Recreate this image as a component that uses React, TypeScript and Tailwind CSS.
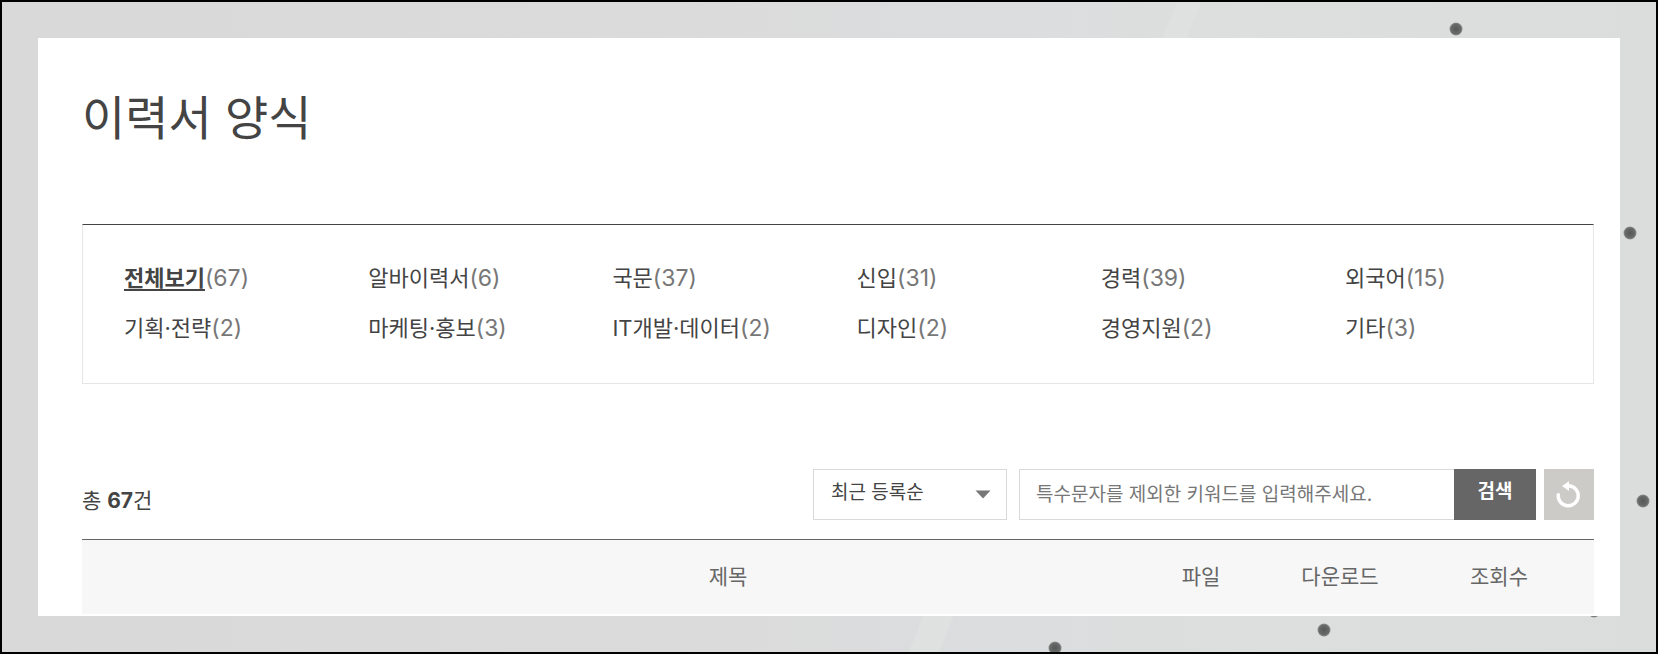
const categories = [
  { name: '전체보기', count: 67, active: true },
  { name: '알바이력서', count: 6 },
  { name: '국문', count: 37 },
  { name: '신입', count: 31 },
  { name: '경력', count: 39 },
  { name: '외국어', count: 15 },
  { name: '기획·전략', count: 2 },
  { name: '마케팅·홍보', count: 3 },
  { name: 'IT개발·데이터', count: 2 },
  { name: '디자인', count: 2 },
  { name: '경영지원', count: 2 },
  { name: '기타', count: 3 },
];

const specks = [
  [1456, 29],
  [1630, 233],
  [1643, 501],
  [1594, 611],
  [1324, 630],
  [1055, 648],
];

function PaperBackground() {
  return (
    <svg
      className="absolute inset-0 h-full w-full"
      viewBox="2 2 1654 650"
      preserveAspectRatio="xMaxYMin slice"
      aria-hidden="true"
    >
      <defs>
        <linearGradient id="paper" x1="0" x2="1" y1="0" y2="0">
          <stop offset="0" stopColor="#d9d9d9" />
          <stop offset="0.4" stopColor="#dbdbdb" />
          <stop offset="0.62" stopColor="#dcdddf" />
          <stop offset="0.75" stopColor="#dcdfdd" />
          <stop offset="1" stopColor="#dadddb" />
        </linearGradient>
        <linearGradient id="fold" x1="0" x2="1" y1="0" y2="0">
          <stop offset="0" stopColor="#e0e1e1" stopOpacity="0.9" />
          <stop offset="1" stopColor="#e0e2e1" stopOpacity="0.8" />
        </linearGradient>
        <radialGradient id="speck">
          <stop offset="0" stopColor="#555856" />
          <stop offset="0.75" stopColor="#676a68" />
          <stop offset="1" stopColor="#8f9290" />
        </radialGradient>
      </defs>
      <rect width="1658" height="654" fill="url(#paper)" />
      <path d="M1178 0h24L938 654h-30z" fill="url(#fold)" />
      {specks.map(([x, y]) => (
        <circle key={x} cx={x} cy={y} r="6.5" fill="url(#speck)" />
      ))}
    </svg>
  );
}

export default function App() {
  return (
    <div className="relative min-h-screen border-2 border-black bg-[#dadada] p-9 font-['Inter','Noto_Sans_CJK_KR',sans-serif] text-[#444]">
      <PaperBackground />
      <main className="relative bg-white pr-[26px] pb-0.5 pl-11">
        <h1 className="pt-[42px] text-[47px] leading-[76px] font-normal">이력서 양식</h1>

        <nav
          aria-label="양식 분류"
          className="mt-[68px] border border-[#e6e6e6] border-t-[#444] px-[41px] pt-7 pb-[30px]"
        >
          <ul className="grid grid-cols-[repeat(5,17.1%)_1fr] text-[22px] leading-[50px]">
            {categories.map((c) => (
              <li key={c.name} className="h-[50px] whitespace-nowrap">
                <a href="#list">
                  <span className={c.active ? 'font-bold underline decoration-2 underline-offset-3' : ''}>{c.name}</span>
                  <span className="text-[23px] text-[#777]">({c.count})</span>
                </a>
              </li>
            ))}
          </ul>
        </nav>

        <div className="mt-[85px] flex items-stretch justify-between">
          <p className="pt-4 text-[21px] leading-[32px]">
            총 <strong className="font-bold">67</strong>건
          </p>
          <form className="flex h-[51px] text-[19px]" onSubmit={(e) => e.preventDefault()}>
            <div className="relative mr-3 w-[194px]">
              <select
                aria-label="정렬"
                className="h-full w-full appearance-none border border-[#d9d9d9] bg-white px-[17px] pb-0.5"
              >
                <option>최근 등록순</option>
              </select>
              <svg className="pointer-events-none absolute top-[21px] right-4 h-[9px] w-4" viewBox="0 0 16 9" aria-hidden="true">
                <path d="M.5 .5h15L8 8.5z" fill="#777" />
              </svg>
            </div>
            <input
              type="text"
              aria-label="검색어"
              placeholder="특수문자를 제외한 키워드를 입력해주세요."
              className="w-[435px] border border-r-0 border-[#d9d9d9] px-4 pt-0.5 placeholder:text-[#777]"
            />
            <button type="submit" className="w-[82px] bg-[#666] pb-1 font-bold text-white">
              검색
            </button>
            <button type="reset" aria-label="초기화" className="ml-2 grid w-[50px] place-items-center bg-[#cccbc7]">
              <svg className="h-7 w-7" viewBox="0 0 28 28" fill="none" aria-hidden="true">
                <path d="M3.3 13.6A10 10 0 1 0 13.3 4.8" stroke="#fff" strokeWidth="3.4" strokeLinecap="round" />
                <path d="M7 5 14 .2v9.8z" fill="#fff" />
              </svg>
            </button>
          </form>
        </div>

        <table id="list" className="mt-[19px] w-full table-fixed border-t border-[#666] bg-[#f7f7f7] text-[21px] leading-[74px] text-[#666]">
          <colgroup>
            <col className="w-[248px]" />
            <col />
            <col className="w-[150px]" />
            <col className="w-[128px]" />
            <col className="w-[190px]" />
          </colgroup>
          <thead>
            <tr>
              <td />
              <th className="font-normal">제목</th>
              <th className="font-normal">파일</th>
              <th className="font-normal">다운로드</th>
              <th className="font-normal">조회수</th>
            </tr>
          </thead>
        </table>
      </main>
    </div>
  );
}
